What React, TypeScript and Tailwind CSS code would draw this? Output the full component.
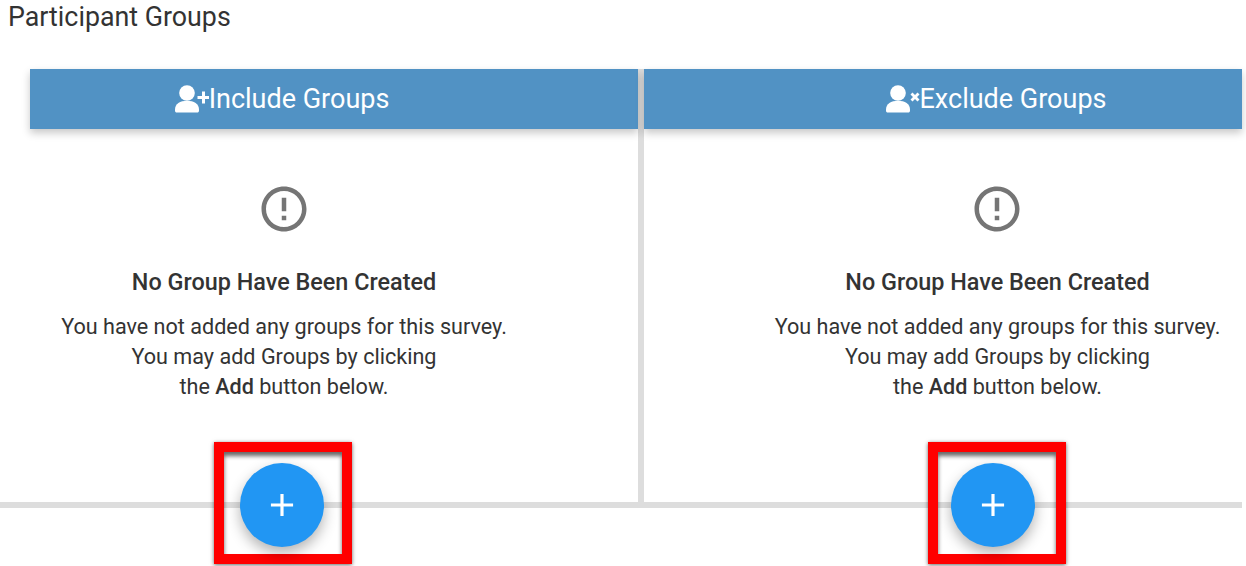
import { MdAdd, MdErrorOutline } from "react-icons/md";

function UserMark({ kind }: { kind: "plus" | "cross" }) {
  return (
    <svg width="34" height="28" viewBox="0 0 34 28" fill="white" aria-hidden="true">
      <circle cx="12" cy="8" r="7.8" />
      <path d="M0 24.500c0-5.800 5-8.700 12-8.700s12 2.900 12 8.700v1.200c0 1-.8 1.800-1.800 1.800H1.800C.8 27.500 0 26.700 0 25.700z" />
      {kind === "plus" ? (
        <path d="M27 6.500h3V11h4v3h-4v4.500h-3V14h-4.500v-3H27z" />
      ) : (
        <path d="M24.500 9.500l2-2 2.500 2.500 2.500-2.500 2 2-2.500 2.500 2.500 2.500-2 2-2.500-2.500-2.500 2.500-2-2 2.500-2.500z" />
      )}
    </svg>
  );
}

function GroupPanel({
  title,
  kind,
  className,
  headerClassName,
  bodyClassName,
}: {
  title: string;
  kind: "plus" | "cross";
  className: string;
  headerClassName: string;
  bodyClassName: string;
}) {
  return (
    <section className={`relative flex flex-col ${className}`}>
      <header className="h-[60px] bg-[#5192c4] shadow-[0_4px_8px_rgba(0,0,0,0.22)]">
        <h2 className={`flex h-full items-center justify-center text-[27px] font-normal text-white ${headerClassName}`}>
          <UserMark kind={kind} />
          {title}
        </h2>
      </header>
      <div className={`flex flex-col items-center pt-[53px] text-center text-[#333333] ${bodyClassName}`}>
        <MdErrorOutline size={54} color="#757575" className="-ml-[1px]" />
        <h3 className="mt-[31px] text-[23.400px] leading-[30px] font-medium">No Group Have Been Created</h3>
        <p className="mt-[15px] text-[21.600px] leading-[30px]">
          You have not added any groups for this survey.
          <br />
          You may add Groups by clicking
          <br />
          the <strong className="font-medium">Add</strong> button below.
        </p>
      </div>
    </section>
  );
}

function AddButton({ className, fabClassName }: { className: string; fabClassName: string }) {
  return (
    <div
      className={`absolute top-[373px] flex h-[122px] w-[138px] items-center justify-center border-[10px] border-[#ff0000] shadow-[0_1px_4px_rgba(0,0,0,0.6),inset_0_4px_4px_rgba(0,0,0,0.6)] ${className}`}
    >
      <button
        className={`mt-[3px] flex h-[84px] w-[84px] items-center justify-center rounded-full bg-[#2196f3] text-white shadow-[0_6px_14px_rgba(0,0,0,0.3)] ${fabClassName}`}
      >
        <MdAdd size={38} />
      </button>
    </div>
  );
}

export default function App() {
  return (
    <div className="h-[566px] w-[1246px] overflow-hidden bg-white font-['Roboto',sans-serif]">
      <h1 className="h-[69px] pl-[8px] pt-[1px] text-[26.800px] leading-[32px] font-normal text-[#333333]">
        Participant Groups
      </h1>
      <div className="relative mr-[4px] flex h-[439px] border-b-[6px] border-[#dddddd] pl-[30px]">
        <GroupPanel
          title="Include Groups"
          kind="plus"
          className="w-[608px]"
          headerClassName="pr-[104px]"
          bodyClassName="pr-[100px]"
        />
        <div className="w-[6px] bg-[#dddddd]" />
        <GroupPanel
          title="Exclude Groups"
          kind="cross"
          className="flex-1"
          headerClassName="pl-[106px]"
          bodyClassName="pl-[109px]"
        />
        <AddButton className="left-[214px]" fabClassName="-ml-[2px]" />
        <AddButton className="left-[928px]" fabClassName="-ml-[8px]" />
      </div>
    </div>
  );
}
